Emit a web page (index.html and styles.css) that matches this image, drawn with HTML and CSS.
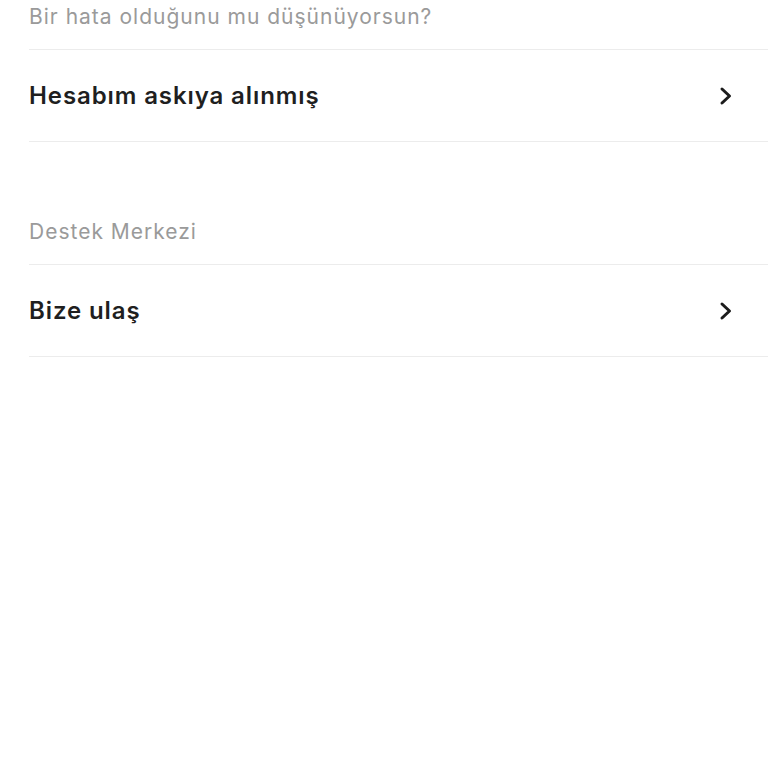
FILE: index.html
```html
<!DOCTYPE html>
<html lang="tr">
<head>
  <meta charset="utf-8">
  <link rel="stylesheet" href="styles.css">
</head>
<body>
  <div class="settings">
    <div class="section">
      <div class="section-title">Bir hata olduğunu mu düşünüyorsun?</div>
      <div class="row">
        <span class="row-text">Hesabım askıya alınmış</span>
        <svg class="chevron" viewBox="0 0 14 20" width="14" height="20">
          <path d="M3 3 L10.5 10 L3 17" fill="none" stroke="#1c1c1c" stroke-width="3" stroke-linecap="round" stroke-linejoin="round"/>
        </svg>
      </div>
    </div>

    <div class="section">
      <div class="section-title">Destek Merkezi</div>
      <div class="row">
        <span class="row-text">Bize ulaş</span>
        <svg class="chevron" viewBox="0 0 14 20" width="14" height="20">
          <path d="M3 3 L10.5 10 L3 17" fill="none" stroke="#1c1c1c" stroke-width="3" stroke-linecap="round" stroke-linejoin="round"/>
        </svg>
      </div>
    </div>
  </div>
</body>
</html>
```

FILE: styles.css
```css
body {
  margin: 0;
  background: #fff;
  font-family: Inter, "Noto Sans", sans-serif;
}

.settings {
  margin-left: 29px;
}

.section + .section {
  margin-top: 73px;
}

.section-title {
  padding: 3px 0 18px;
  font-size: 21px;
  line-height: 28px;
  letter-spacing: 1px;
  color: #9a9a9a;
  border-bottom: 1px solid #ececec;
}

.row {
  height: 91px;
  padding-right: 35px;
  display: flex;
  justify-content: space-between;
  align-items: center;
  border-bottom: 1px solid #ececec;
}

.row-text {
  font-size: 24px;
  font-weight: 600;
  letter-spacing: 0.9px;
  color: #1f1f1f;
}

.chevron {
  display: block;
}
```
